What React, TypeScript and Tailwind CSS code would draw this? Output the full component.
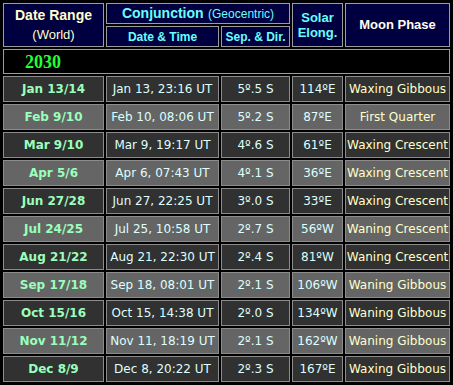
import React from "react";

type Row = { range: string; dt: string; sep: string; elong: string; phase: string };

const rows: Row[] = [
  { range: "Jan 13/14", dt: "Jan 13, 23:16 UT", sep: "5º.5 S", elong: "114ºE", phase: "Waxing Gibbous" },
  { range: "Feb 9/10", dt: "Feb 10, 08:06 UT", sep: "5º.2 S", elong: "87ºE", phase: "First Quarter" },
  { range: "Mar 9/10", dt: "Mar 9, 19:17 UT", sep: "4º.6 S", elong: "61ºE", phase: "Waxing Crescent" },
  { range: "Apr 5/6", dt: "Apr 6, 07:43 UT", sep: "4º.1 S", elong: "36ºE", phase: "Waxing Crescent" },
  { range: "Jun 27/28", dt: "Jun 27, 22:25 UT", sep: "3º.0 S", elong: "33ºE", phase: "Waxing Crescent" },
  { range: "Jul 24/25", dt: "Jul 25, 10:58 UT", sep: "2º.7 S", elong: "56ºW", phase: "Waning Crescent" },
  { range: "Aug 21/22", dt: "Aug 21, 22:30 UT", sep: "2º.4 S", elong: "81ºW", phase: "Waning Crescent" },
  { range: "Sep 17/18", dt: "Sep 18, 08:01 UT", sep: "2º.1 S", elong: "106ºW", phase: "Waning Gibbous" },
  { range: "Oct 15/16", dt: "Oct 15, 14:38 UT", sep: "2º.0 S", elong: "134ºW", phase: "Waning Gibbous" },
  { range: "Nov 11/12", dt: "Nov 11, 18:19 UT", sep: "2º.1 S", elong: "162ºW", phase: "Waning Gibbous" },
  { range: "Dec 8/9", dt: "Dec 8, 20:22 UT", sep: "2º.3 S", elong: "167ºE", phase: "Waxing Gibbous" },
];

const hdr =
  "border border-[#9c9c9c] bg-[#000040] flex flex-col items-center justify-center text-center font-['Liberation_Sans',Arial,sans-serif]";

export default function App() {
  return (
    <div className="w-[453px] h-[385px] bg-black overflow-hidden">
      <div className="grid grid-cols-[101px_113px_69px_51px_105px] grid-rows-[21px_21px_25px_repeat(11,26px)] gap-[2px] p-[3px]">
        <div className={`${hdr} row-span-2 text-[#ffffcc] leading-[19px]`}>
          <span className="font-bold text-[14px]">Date Range</span>
          <span className="text-[13px]">(World)</span>
        </div>
        <div className={`${hdr} col-span-2 text-[#66ffff]`}>
          <span className="leading-[16px]">
            <span className="font-bold text-[14px]">Conjunction</span>{" "}
            <span className="text-[12px]">(Geocentric)</span>
          </span>
        </div>
        <div className={`${hdr} row-span-2 text-[#66ffff] font-bold text-[13px] leading-[15px]`}>
          <span>Solar</span>
          <span>Elong.</span>
        </div>
        <div className={`${hdr} row-span-2 text-[#ffffee] font-bold text-[13px]`}>Moon Phase</div>
        <div className={`${hdr} text-[#66ffff] font-bold text-[12px]`}>Date &amp; Time</div>
        <div className={`${hdr} text-[#66ffff] font-bold text-[12px]`}>Sep. &amp; Dir.</div>
        <div className="col-span-5 border border-[#9c9c9c] bg-black flex items-center pl-[21px]">
          <span className="text-[#22ff33] font-bold text-[18px] leading-none font-['Liberation_Serif','Times_New_Roman',serif]">
            2030
          </span>
        </div>
        {rows.map((r, i) => {
          const bg = i % 2 === 0 ? "bg-[#313131]" : "bg-[#656565]";
          const cell = `border border-[#8c8c8c] ${bg} flex items-center justify-center text-[12px] whitespace-nowrap font-['DejaVu_Sans',Verdana,sans-serif]`;
          return (
            <React.Fragment key={r.range}>
              <div className={`${cell} font-bold text-[#99ffbb]`}>{r.range}</div>
              <div className={`${cell} text-[#ddffff]`}>{r.dt}</div>
              <div className={`${cell} text-[#ddffff]`}>{r.sep}</div>
              <div className={`${cell} text-[#ddffff]`}>{r.elong}</div>
              <div className={`${cell} text-[#ffffcc]`}>{r.phase}</div>
            </React.Fragment>
          );
        })}
      </div>
    </div>
  );
}
